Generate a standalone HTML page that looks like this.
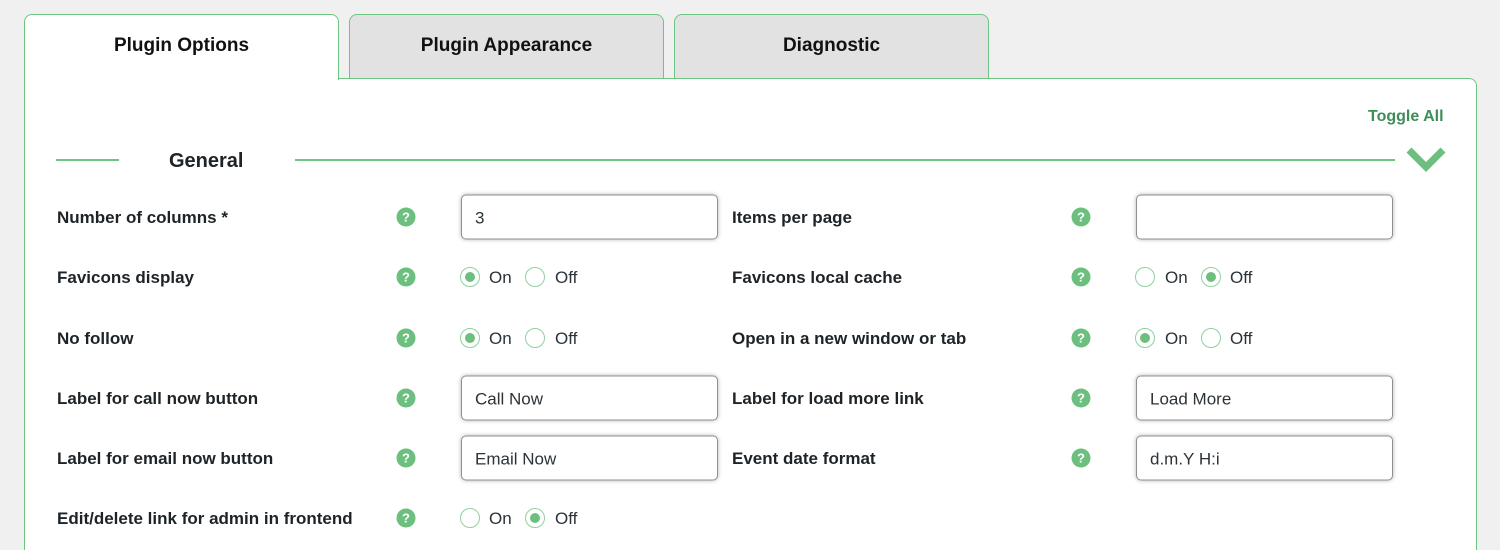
<!DOCTYPE html>
<html style="width:1500px;height:550px;overflow:hidden"><head><meta charset="utf-8"><style>
*{box-sizing:border-box;margin:0;padding:0}
body{width:1500px;height:550px;background:#f0f0f0;font-family:"Liberation Sans",sans-serif;position:relative;overflow:hidden;color:#1d2327}
.tab{position:absolute;top:14px;width:315px;height:65px;border:1px solid #6cc581;border-radius:8px 8px 0 0;background:#e2e2e2;font-weight:bold;font-size:19px;text-align:center;line-height:62px;color:#111}
.panel{position:absolute;left:24px;top:78px;width:1453px;height:472px;background:#fff;border:1px solid #6cc581;border-bottom:none;border-radius:0 8px 0 0}
.a{position:absolute}
.lbl{position:absolute;font-size:17px;font-weight:600;color:#1d2327;transform:translateY(-45%)}
.help{position:absolute;width:19px;height:19px;border-radius:50%;background:#6cbf7f;color:#fff;font-size:13px;font-weight:bold;text-align:center;line-height:19px;transform:translate(-50%,-50%)}
.inp{position:absolute;width:257px;height:45px;border:1px solid #8c8f94;border-radius:5px;box-shadow:0 0 4px rgba(0,0,0,.3);background:#fff;font-size:17px;padding-left:13px;line-height:45px;color:#2c3338;transform:translateY(-50%)}
.r{position:absolute;width:20px;height:20px;border-radius:50%;border:1px solid #8fd19e;transform:translate(-50%,-50%);background:#fff}
.r.on::after{content:"";position:absolute;left:4px;top:4px;width:10px;height:10px;border-radius:50%;background:#6cbf7f}
.rt{position:absolute;font-size:17px;color:#2c3338;transform:translateY(-45%)}
</style></head><body>
<div class="tab" style="left:24px;background:#fff;border-bottom:none;height:66px;z-index:2">Plugin Options</div>
<div class="tab" style="left:349px">Plugin Appearance</div>
<div class="tab" style="left:674px">Diagnostic</div>
<div class="panel"></div>
<div class="a" style="left:25px;top:78px;width:313px;height:3px;background:#fff;z-index:3"></div>
<div class="a" style="left:1368px;top:108px;font-size:16px;font-weight:bold;color:#3e8e58">Toggle All</div>
<div class="a" style="left:56px;top:159px;width:63px;height:2px;background:#6cc581"></div>
<div class="a" style="left:169px;top:150px;font-size:20px;font-weight:bold;color:#1d2327">General</div>
<div class="a" style="left:295px;top:159px;width:1100px;height:2px;background:#6cc581"></div>
<svg class="a" style="left:1406px;top:146px" width="40" height="28"><path d="M3 4 L20 21 L37 4" fill="none" stroke="#6cbf7f" stroke-width="7"/></svg>

<div class="lbl" style="left:57px;top:217px">Number of columns *</div><div class="help" style="left:406px;top:217px">?</div>
<div class="inp" style="left:461px;top:217px">3</div>
<div class="lbl" style="left:732px;top:217px">Items per page</div><div class="help" style="left:1081px;top:217px">?</div>
<div class="inp" style="left:1136px;top:217px"></div>

<div class="lbl" style="left:57px;top:277px">Favicons display</div><div class="help" style="left:406px;top:277px">?</div>
<div class="r on" style="left:470px;top:277px"></div><div class="rt" style="left:489px;top:277px">On</div>
<div class="r" style="left:535px;top:277px"></div><div class="rt" style="left:555px;top:277px">Off</div>
<div class="lbl" style="left:732px;top:277px">Favicons local cache</div><div class="help" style="left:1081px;top:277px">?</div>
<div class="r" style="left:1145px;top:277px"></div><div class="rt" style="left:1165px;top:277px">On</div>
<div class="r on" style="left:1211px;top:277px"></div><div class="rt" style="left:1230px;top:277px">Off</div>

<div class="lbl" style="left:57px;top:338px">No follow</div><div class="help" style="left:406px;top:338px">?</div>
<div class="r on" style="left:470px;top:338px"></div><div class="rt" style="left:489px;top:338px">On</div>
<div class="r" style="left:535px;top:338px"></div><div class="rt" style="left:555px;top:338px">Off</div>
<div class="lbl" style="left:732px;top:338px">Open in a new window or tab</div><div class="help" style="left:1081px;top:338px">?</div>
<div class="r on" style="left:1145px;top:338px"></div><div class="rt" style="left:1165px;top:338px">On</div>
<div class="r" style="left:1211px;top:338px"></div><div class="rt" style="left:1230px;top:338px">Off</div>

<div class="lbl" style="left:57px;top:398px">Label for call now button</div><div class="help" style="left:406px;top:398px">?</div>
<div class="inp" style="left:461px;top:398px">Call Now</div>
<div class="lbl" style="left:732px;top:398px">Label for load more link</div><div class="help" style="left:1081px;top:398px">?</div>
<div class="inp" style="left:1136px;top:398px">Load More</div>

<div class="lbl" style="left:57px;top:458px">Label for email now button</div><div class="help" style="left:406px;top:458px">?</div>
<div class="inp" style="left:461px;top:458px">Email Now</div>
<div class="lbl" style="left:732px;top:458px">Event date format</div><div class="help" style="left:1081px;top:458px">?</div>
<div class="inp" style="left:1136px;top:458px">d.m.Y H:i</div>

<div class="lbl" style="left:57px;top:518px">Edit/delete link for admin in frontend</div><div class="help" style="left:406px;top:518px">?</div>
<div class="r" style="left:470px;top:518px"></div><div class="rt" style="left:489px;top:518px">On</div>
<div class="r on" style="left:535px;top:518px"></div><div class="rt" style="left:555px;top:518px">Off</div>
</body></html>
